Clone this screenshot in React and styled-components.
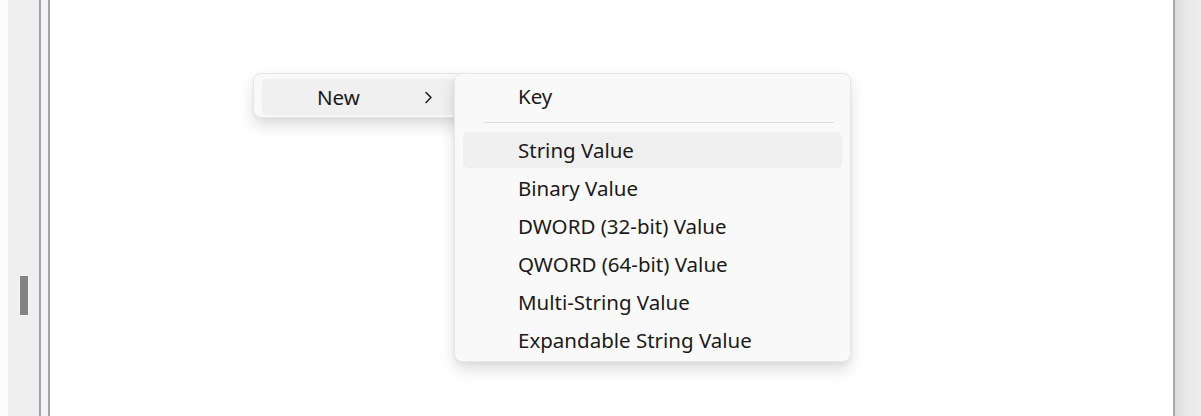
import React from 'react';
import styled, { createGlobalStyle } from 'styled-components';

const GlobalStyle = createGlobalStyle`
  html, body {
    margin: 0;
    padding: 0;
    background: #ffffff;
  }
  body {
    font-family: "Noto Sans", "Open Sans", "Liberation Sans", sans-serif;
    color: #1a1a1a;
  }
`;

// window frame
const Frame = styled.div`
  display: flex;
  width: 1201px;
  height: 416px;
  overflow: hidden;
  background: #ffffff;
`;

const OuterGutter = styled.div`
  width: 8px;
  background: #fbfbfb;
`;

const TreePane = styled.div`
  width: 31px;
  background: #efefef;
  display: flex;
  flex-direction: column;
  align-items: center;
  padding-top: 275px;
  box-sizing: border-box;
`;

const ScrollThumb = styled.div`
  width: 8px;
  height: 39px;
  margin-left: 1px;
  background: #848484;
  border: 1px solid #f6f6f6;
  border-radius: 1px;
`;

const Splitter = styled.div`
  width: 7px;
  background: #f4f4f6;
  border-left: 2px solid #a3a3aa;
  border-right: 2px solid #a3a3aa;
`;

const Content = styled.div`
  position: relative;
  flex: 1;
  background: #ffffff;
`;

const RightEdge = styled.div`
  width: 26px;
  border-left: 2px solid #a9a9ad;
  background: linear-gradient(to right, #dcdcde, #e8e8e8 40%, #ededed);
`;

// context menus
const Menu = styled.div`
  position: absolute;
  left: ${(p) => p.$left}px;
  top: ${(p) => p.$top}px;
  width: ${(p) => p.$width}px;
  box-sizing: border-box;
  display: flex;
  flex-direction: column;
  padding: ${(p) => p.$pad};
  background: #f9f9f9;
  border: 1px solid #e6e6e6;
  border-radius: 8px;
  box-shadow: 0 8px 16px rgba(0, 0, 0, 0.13), 0 2px 4px rgba(0, 0, 0, 0.04);
  z-index: ${(p) => p.$z};
`;

const Item = styled.div`
  display: flex;
  align-items: center;
  height: 36px;
  margin: 1px 8px;
  padding-left: ${(p) => p.$indent}px;
  padding-right: ${(p) => p.$right || 20}px;
  border-radius: 5px;
  background: ${(p) => (p.$active ? '#f0f0f0' : 'transparent')};
  font-size: 20.5px;
  white-space: nowrap;
`;

const Label = styled.span`
  flex: 1;
`;

const Chevron = styled.svg`
  width: 9px;
  height: 13px;
`;

const Separator = styled.div`
  height: 1px;
  margin: 7px 16px 8px 29px;
  background: #dcdcdc;
`;

const items = [
  'String Value',
  'Binary Value',
  'DWORD (32-bit) Value',
  'QWORD (64-bit) Value',
  'Multi-String Value',
  'Expandable String Value',
];

const App = () => {
  return (
    <>
      <GlobalStyle />
      <Frame>
        <OuterGutter />
        <TreePane>
          <ScrollThumb />
        </TreePane>
        <Splitter />
        <Content>
          <Menu $left={203} $top={73} $width={215} $pad="4px 0 1px" $z={1}>
            <Item $active $indent={55} $right={26}>
              <Label>New</Label>
              <Chevron viewBox="0 0 9 13">
                <path
                  d="M2 1.5 L7 6.5 L2 11.5"
                  fill="none"
                  stroke="#1a1a1a"
                  strokeWidth="1.5"
                  strokeLinecap="round"
                  strokeLinejoin="round"
                />
              </Chevron>
            </Item>
          </Menu>
          <Menu $left={404} $top={73} $width={397} $pad="3px 0 2px" $z={2}>
            <Item $indent={55}>Key</Item>
            <Separator />
            {items.map((text, i) => (
              <Item key={text} $indent={55} $active={i === 0}>
                {text}
              </Item>
            ))}
          </Menu>
        </Content>
        <RightEdge />
      </Frame>
    </>
  );
};

export default App;
